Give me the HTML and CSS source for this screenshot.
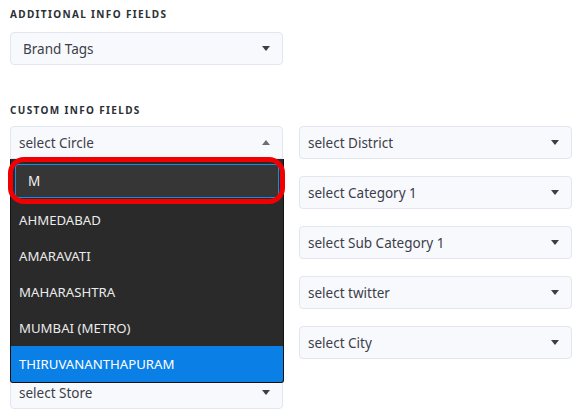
FILE: index.html
```html
<!DOCTYPE html>
<html>
<head>
<meta charset="utf-8">
<link rel="stylesheet" href="styles.css">
</head>
<body>
<div class="page">
  <h3 class="heading">ADDITIONAL INFO FIELDS</h3>
  <div class="select brand">
    <span>Brand Tags</span>
    <span class="caret"></span>
  </div>

  <h3 class="heading custom">CUSTOM INFO FIELDS</h3>
  <div class="grid">
    <div class="cell">
      <div class="select open">
        <span>select Circle</span>
        <span class="caret up"></span>
      </div>
      <div class="menu">
        <div class="search"><input class="search-input" type="text" value="M"></div>
        <ul class="options">
          <li>AHMEDABAD</li>
          <li>AMARAVATI</li>
          <li>MAHARASHTRA</li>
          <li>MUMBAI (METRO)</li>
          <li class="active">THIRUVANANTHAPURAM</li>
        </ul>
        <div class="ring"></div>
      </div>
    </div>
    <div class="select"><span>select District</span><span class="caret"></span></div>
    <div class="select"><span>select Category 1</span><span class="caret"></span></div>
    <div class="select"><span>select Sub Category 1</span><span class="caret"></span></div>
    <div class="select"><span>select twitter</span><span class="caret"></span></div>
    <div class="select"><span>select City</span><span class="caret"></span></div>
    <div class="select"><span>select Store</span><span class="caret"></span></div>
  </div>
</div>
</body>
</html>
```
FILE: styles.css
```css
* { box-sizing: border-box; }
html, body { margin: 0; padding: 0; background: #fff; }
body {
  font-family: "Noto Sans", "Open Sans", sans-serif;
  color: #363b43;
  width: 583px;
  height: 418px;
  overflow: hidden;
}
.page { padding: 8px 10px 0 10px; }
.heading {
  margin: 0;
  font-size: 10px;
  font-weight: 700;
  letter-spacing: 1.35px;
  line-height: 13px;
  color: #2b2f36;
}
.custom { margin-top: 39px; }
.select {
  position: relative;
  height: 33px;
  border: 1px solid #e3e6ee;
  border-radius: 4px;
  background: #f8f9fd;
  display: flex;
  align-items: center;
  justify-content: space-between;
  padding: 0 12px 0 8px;
  font-size: 13.5px;
  color: #3b4048;
}
.brand { width: 273px; margin-top: 11px; padding-left: 12px; }
.grid {
  margin-top: 9px;
  display: grid;
  grid-template-columns: 273px 273px;
  column-gap: 16px;
  row-gap: 17px;
  grid-template-rows: repeat(6, 33px);
}
.cell { position: relative; grid-column: 1; grid-row: 1; z-index: 2; }
.grid > .select:nth-child(2) { grid-column: 2; grid-row: 1; }
.grid > .select:nth-child(3) { grid-column: 2; grid-row: 2; }
.grid > .select:nth-child(4) { grid-column: 2; grid-row: 3; }
.grid > .select:nth-child(5) { grid-column: 2; grid-row: 4; }
.grid > .select:nth-child(6) { grid-column: 2; grid-row: 5; }
.grid > .select:nth-child(7) { grid-column: 1; grid-row: 6; }
.caret {
  width: 0; height: 0;
  border-left: 4.5px solid transparent;
  border-right: 4.5px solid transparent;
  border-top: 5px solid #3a3f47;
}
.caret.up { border-top: 0; border-bottom: 5px solid #6a6f77; }
.open { border-bottom-left-radius: 0; border-bottom-right-radius: 0; }
.menu {
  position: absolute;
  left: 0;
  top: 33px;
  width: 274px;
  background: #2a2a2a;
  border: 1px solid #111;
  border-top: 0;
  border-radius: 0 0 3px 3px;
}
.search { padding: 5px 4px 4px 4px; }
.search-input {
  display: block;
  width: 100%;
  height: 34px;
  background: #363636;
  border: 1px solid #1e88e5;
  border-radius: 3px;
  color: #f2f2f2;
  font-family: "Noto Sans", sans-serif;
  font-size: 13.5px;
  padding: 0 12px;
  outline: none;
}
.options { list-style: none; margin: 0; padding: 0; }
.options li {
  height: 36px;
  line-height: 36px;
  padding-left: 8px;
  color: #eaeaea;
  font-size: 13.2px;
}
.options li.active { background: #0a7fe6; color: #fff; border-radius: 0 0 2px 2px; }
.ring {
  position: absolute;
  left: -3px;
  top: -2px;
  width: 277px;
  height: 47px;
  border: 5px solid #f00000;
  border-radius: 16px;
  pointer-events: none;
}
```
